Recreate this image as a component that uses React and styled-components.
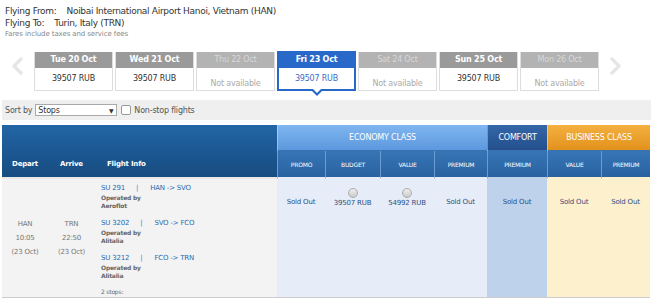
import React from 'react';
import styled, { createGlobalStyle } from 'styled-components';

const Global = createGlobalStyle`
  body {
    margin: 0;
    background: #fff;
    font-family: "DejaVu Sans", Verdana, sans-serif;
    color: #333;
  }
`;

const Page = styled.div`
  width: 651px;
  height: 301px;
  overflow: hidden;
  letter-spacing: -0.2px;
`;

const Route = styled.div`
  padding: 5px 0 0 5px;
  font-size: 9px;
  line-height: 12px;
  color: #333;
  letter-spacing: -0.3px;

  span {
    display: inline-block;
    margin-right: 10px;
  }
`;

const Note = styled.div`
  font-size: 7px;
  color: #888;
  line-height: 11px;
  letter-spacing: -0.1px;
`;

const Strip = styled.div`
  display: flex;
  align-items: flex-start;
  height: 60px;
  padding-top: 12px;
  box-sizing: border-box;
`;

const Arrow = styled.div`
  width: 34px;
  display: flex;
  justify-content: center;
  padding-top: 5px;
`;

const Days = styled.div`
  display: flex;
  gap: 2px;
  width: 565px;
`;

const Day = styled.div`
  position: relative;
  width: 79px;
  margin-top: ${p => (p.$on ? '-1px' : '0')};
  border: ${p => (p.$on ? '2px solid #2868c8' : '1px solid #ddd')};
  border-top: none;
  background: #fff;
  box-sizing: border-box;
  ${p => p.$on && 'z-index: 1;'}

  ${p =>
    p.$on &&
    `&::after {
      content: '';
      position: absolute;
      left: 50%;
      bottom: -7px;
      margin-left: -6px;
      border-left: 6px solid transparent;
      border-right: 6px solid transparent;
      border-top: 6px solid #2868c8;
    }
    &::before {
      content: '';
      position: absolute;
      left: 50%;
      bottom: -4px;
      margin-left: -4px;
      border-left: 4px solid transparent;
      border-right: 4px solid transparent;
      border-top: 4px solid #fff;
      z-index: 2;
    }`}
`;

const DayHead = styled.div`
  height: ${p => (p.$on ? '17px' : '16px')};
  line-height: ${p => (p.$on ? '17px' : '16px')};
  text-align: center;
  font-size: 8px;
  color: ${p => (p.$off ? '#d8d8d8' : '#fff')};
  background: ${p => (p.$on ? '#2868c8' : p.$off ? '#b3b3b3' : '#9a9a9a')};
  font-weight: ${p => (p.$off ? 'normal' : 'bold')};
`;

const DayBody = styled.div`
  height: 21px;
  display: flex;
  align-items: ${p => (p.$off ? 'flex-end' : 'center')};
  justify-content: center;
  font-size: 8px;
  color: ${p => (p.$on ? '#3c6cc4' : p.$off ? '#aaa' : '#333')};
  padding-bottom: ${p => (p.$off ? '1px' : '0')};
  box-sizing: border-box;
`;

const SortBar = styled.div`
  margin: 0 0 0 2px;
  height: 20px;
  background: #efefef;
  display: flex;
  align-items: center;
  padding-left: 3px;
  font-size: 8px;
  color: #555;
  gap: 3px;
`;

const Select = styled.div`
  width: 82px;
  height: 12px;
  border: 1px solid #aaa;
  background: #fff;
  display: flex;
  align-items: center;
  justify-content: space-between;
  padding: 0 3px 0 2px;
  box-sizing: border-box;
  font-size: 8px;
  color: #333;

  i {
    font-style: normal;
    font-size: 6px;
  }
`;

const Check = styled.div`
  width: 8px;
  height: 8px;
  border: 1px solid #999;
  border-radius: 2px;
  background: #fff;
  margin-left: 1px;
`;

const Table = styled.div`
  margin: 5px 0 0 2px;
  display: grid;
  grid-template-columns: 46px 47px 182px 48px 55px 54px 53px 60px 54px 49px;
  grid-template-rows: 26px 28px 119px;
`;

const LeftHead = styled.div`
  grid-row: 1 / span 2;
  background: linear-gradient(#2265a6, #174c80);
  color: #fff;
  font-size: 7px;
  font-weight: bold;
  display: flex;
  align-items: flex-end;
  justify-content: ${p => (p.$start ? 'flex-start' : 'center')};
  padding: 0 0 9px ${p => (p.$start ? '12px' : '0')};
  border-bottom: 2px solid #e8e8e8;
`;

const ClassHead = styled.div`
  grid-column: span ${p => p.$span};
  background: ${p => p.$bg};
  color: #fff;
  font-size: 8px;
  display: flex;
  align-items: center;
  justify-content: center;
  border-left: 1px solid rgba(255, 255, 255, 0.35);
  border-bottom: 1px solid #3a72b0;
`;

const SubHead = styled.div`
  background: linear-gradient(#3675b6, #2a62a0);
  color: #fff;
  font-size: 6px;
  display: flex;
  align-items: center;
  justify-content: center;
  border-left: 1px solid #6c9bd0;
  border-bottom: 2px solid ${p => p.$line};
`;

const Cell = styled.div`
  background: ${p => p.$bg};
  border-bottom: 1px solid #ccc;
  font-size: 7px;
  color: ${p => p.$color || '#555'};
  display: flex;
  flex-direction: column;
  align-items: center;
  justify-content: center;
  line-height: 14px;
  box-sizing: border-box;
`;

const Fare = styled(Cell)`
  justify-content: flex-start;
  padding-top: ${p => (p.$radio ? '9px' : '16px')};
`;

const Radio = styled.div`
  width: 8px;
  height: 8px;
  border-radius: 50%;
  border: 1px solid #aaa;
  background: linear-gradient(#eee, #ccc);
  margin-bottom: -2px;
`;

const Info = styled.div`
  background: #f3f3f3;
  border-bottom: 1px solid #ccc;
  padding: 4px 0 0 6px;
  font-size: 7px;
`;

const Leg = styled.div`
  margin-bottom: 8px;
`;

const LegNo = styled.div`
  color: #2a6ab0;
  line-height: 11px;

  b {
    font-weight: normal;
    color: #2a8ad6;
    margin: 0 12px 0 11px;
  }
`;

const Carrier = styled.div`
  color: #666;
  font-weight: bold;
  font-size: 6px;
  line-height: 8px;
`;

const Stops = styled.div`
  color: #666;
  font-size: 6px;
  margin-top: 4px;
`;

const Chevron = ({ flip }) => (
  <svg width="12" height="18" viewBox="0 0 12 18" style={{ transform: flip ? 'scaleX(-1)' : undefined }}>
    <path d="M10 2 L3 9 L10 16" fill="none" stroke="#e6e6e6" strokeWidth="3.5" strokeLinecap="round" strokeLinejoin="round" />
  </svg>
);

const days = [
  { d: 'Tue 20 Oct', p: '39507 RUB' },
  { d: 'Wed 21 Oct', p: '39507 RUB' },
  { d: 'Thu 22 Oct', off: true },
  { d: 'Fri 23 Oct', p: '39507 RUB', on: true },
  { d: 'Sat 24 Oct', off: true },
  { d: 'Sun 25 Oct', p: '39507 RUB' },
  { d: 'Mon 26 Oct', off: true },
];

const legs = [
  { no: 'SU 291', r: 'HAN -> SVO', by: 'Aeroflot' },
  { no: 'SU 3202', r: 'SVO -> FCO', by: 'Alitalia' },
  { no: 'SU 3212', r: 'FCO -> TRN', by: 'Alitalia' },
];

const ECO = '#e6edf8';
const COMF = '#bed2ec';
const BUS = '#fdf0cc';
const FARE = '#2f4f82';

export default function App() {
  return (
    <Page>
      <Global />
      <Route>
        <div><span>Flying From:</span>Noibai International Airport Hanoi, Vietnam (HAN)</div>
        <div><span>Flying To:</span>Turin, Italy (TRN)</div>
        <Note>Fares include taxes and service fees</Note>
      </Route>
      <Strip>
        <Arrow><Chevron /></Arrow>
        <Days>
          {days.map(x => (
            <Day key={x.d} $on={x.on}>
              <DayHead $on={x.on} $off={x.off}>{x.d}</DayHead>
              <DayBody $on={x.on} $off={x.off}>{x.off ? 'Not available' : x.p}</DayBody>
            </Day>
          ))}
        </Days>
        <Arrow><Chevron flip /></Arrow>
      </Strip>
      <SortBar>
        Sort by
        <Select>Stops<i>▼</i></Select>
        <Check />
        Non-stop flights
      </SortBar>
      <Table>
        <LeftHead>Depart</LeftHead>
        <LeftHead>Arrive</LeftHead>
        <LeftHead $start>Flight Info</LeftHead>
        <ClassHead $span={4} $bg="linear-gradient(#80b6f0, #5c98de)">ECONOMY CLASS</ClassHead>
        <ClassHead $span={1} $bg="linear-gradient(#3467a8, #244f8c)">COMFORT</ClassHead>
        <ClassHead $span={2} $bg="linear-gradient(#f4b040, #e2921c)">BUSINESS CLASS</ClassHead>
        <SubHead $line={ECO} style={{ gridRow: 2, gridColumn: 4 }}>PROMO</SubHead>
        <SubHead $line={ECO}>BUDGET</SubHead>
        <SubHead $line={ECO}>VALUE</SubHead>
        <SubHead $line={ECO}>PREMIUM</SubHead>
        <SubHead $line={COMF}>PREMIUM</SubHead>
        <SubHead $line={BUS}>VALUE</SubHead>
        <SubHead $line={BUS}>PREMIUM</SubHead>

        <Cell $bg="#f3f3f3" $color="#777">
          <div>HAN</div><div>10:05</div><div>(23 Oct)</div>
        </Cell>
        <Cell $bg="#f3f3f3" $color="#777">
          <div>TRN</div><div>22:50</div><div>(23 Oct)</div>
        </Cell>
        <Info>
          {legs.map(l => (
            <Leg key={l.no}>
              <LegNo>{l.no}<b>|</b>{l.r}</LegNo>
              <Carrier>Operated by<br />{l.by}</Carrier>
            </Leg>
          ))}
          <Stops>2 stops:</Stops>
        </Info>
        <Fare $bg={ECO} $color={FARE}>Sold Out</Fare>
        <Fare $bg={ECO} $color={FARE} $radio><Radio />39507 RUB</Fare>
        <Fare $bg={ECO} $color={FARE} $radio><Radio />54992 RUB</Fare>
        <Fare $bg={ECO} $color={FARE}>Sold Out</Fare>
        <Fare $bg={COMF} $color={FARE}>Sold Out</Fare>
        <Fare $bg={BUS} $color={FARE}>Sold Out</Fare>
        <Fare $bg={BUS} $color={FARE}>Sold Out</Fare>
      </Table>
    </Page>
  );
}
